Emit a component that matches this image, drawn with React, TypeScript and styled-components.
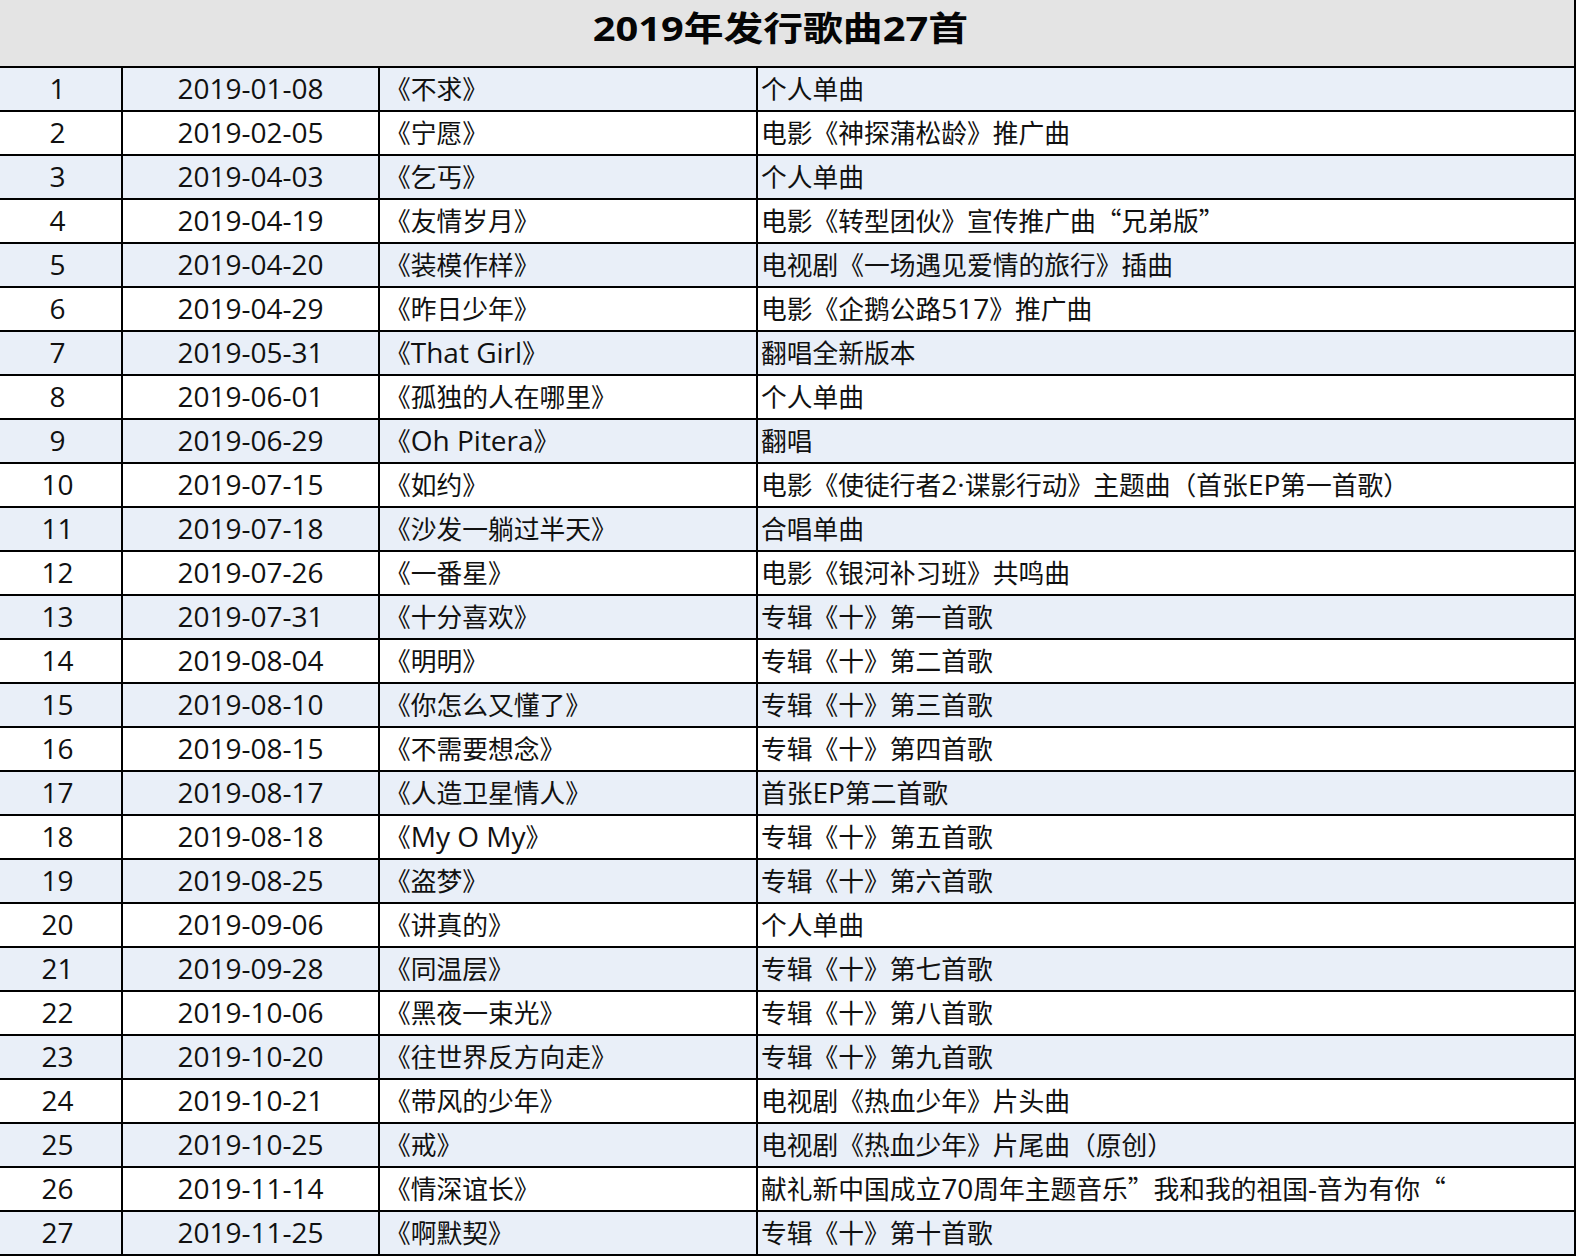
import React from "react";
import styled, { createGlobalStyle } from "styled-components";

const GlobalStyle = createGlobalStyle`
  html, body {
    margin: 0;
    padding: 0;
    background: #ffffff;
  }
  body {
    font-family: "Open Sans", "Noto Sans CJK SC", sans-serif;
    color: #111111;
  }
`;

interface Song {
  no: number;
  date: string;
  title: string;
  note: string;
}

const SONGS: Song[] = [
  { no: 1, date: "2019-01-08", title: "《不求》", note: "个人单曲" },
  { no: 2, date: "2019-02-05", title: "《宁愿》", note: "电影《神探蒲松龄》推广曲" },
  { no: 3, date: "2019-04-03", title: "《乞丐》", note: "个人单曲" },
  { no: 4, date: "2019-04-19", title: "《友情岁月》", note: "电影《转型团伙》宣传推广曲“兄弟版”" },
  { no: 5, date: "2019-04-20", title: "《装模作样》", note: "电视剧《一场遇见爱情的旅行》插曲" },
  { no: 6, date: "2019-04-29", title: "《昨日少年》", note: "电影《企鹅公路517》推广曲" },
  { no: 7, date: "2019-05-31", title: "《That Girl》", note: "翻唱全新版本" },
  { no: 8, date: "2019-06-01", title: "《孤独的人在哪里》", note: "个人单曲" },
  { no: 9, date: "2019-06-29", title: "《Oh Pitera》", note: "翻唱" },
  { no: 10, date: "2019-07-15", title: "《如约》", note: "电影《使徒行者2·谍影行动》主题曲（首张EP第一首歌）" },
  { no: 11, date: "2019-07-18", title: "《沙发一躺过半天》", note: "合唱单曲" },
  { no: 12, date: "2019-07-26", title: "《一番星》", note: "电影《银河补习班》共鸣曲" },
  { no: 13, date: "2019-07-31", title: "《十分喜欢》", note: "专辑《十》第一首歌" },
  { no: 14, date: "2019-08-04", title: "《明明》", note: "专辑《十》第二首歌" },
  { no: 15, date: "2019-08-10", title: "《你怎么又懂了》", note: "专辑《十》第三首歌" },
  { no: 16, date: "2019-08-15", title: "《不需要想念》", note: "专辑《十》第四首歌" },
  { no: 17, date: "2019-08-17", title: "《人造卫星情人》", note: "首张EP第二首歌" },
  { no: 18, date: "2019-08-18", title: "《My O My》", note: "专辑《十》第五首歌" },
  { no: 19, date: "2019-08-25", title: "《盗梦》", note: "专辑《十》第六首歌" },
  { no: 20, date: "2019-09-06", title: "《讲真的》", note: "个人单曲" },
  { no: 21, date: "2019-09-28", title: "《同温层》", note: "专辑《十》第七首歌" },
  { no: 22, date: "2019-10-06", title: "《黑夜一束光》", note: "专辑《十》第八首歌" },
  { no: 23, date: "2019-10-20", title: "《往世界反方向走》", note: "专辑《十》第九首歌" },
  { no: 24, date: "2019-10-21", title: "《带风的少年》", note: "电视剧《热血少年》片头曲" },
  { no: 25, date: "2019-10-25", title: "《戒》", note: "电视剧《热血少年》片尾曲（原创）" },
  { no: 26, date: "2019-11-14", title: "《情深谊长》", note: "献礼新中国成立70周年主题音乐”我和我的祖国-音为有你“" },
  { no: 27, date: "2019-11-25", title: "《啊默契》", note: "专辑《十》第十首歌" },
];

const COLUMNS = "123px 257px 378px 1fr";

const Sheet = styled.div`
  width: 1576px;
  border-right: 2px solid #000;
  box-sizing: border-box;
`;

const TitleBar = styled.div`
  height: 68px;
  box-sizing: border-box;
  border-bottom: 2px solid #000;
  background: #e4e4e4;
  display: flex;
  align-items: center;
  justify-content: center;
  padding: 0 14px 12px 0;
`;

const TitleText = styled.h1`
  margin: 0;
  display: inline-block;
  font-size: 34px;
  font-weight: 700;
  line-height: 1;
  color: #050505;
  transform: scaleX(1.17);
`;

const TitleHan = styled.span`
  font-family: "Noto Sans CJK SC", sans-serif;
`;

const Row = styled.div<{ $striped: boolean }>`
  display: grid;
  grid-template-columns: ${COLUMNS};
  height: 44px;
  box-sizing: border-box;
  border-bottom: 2px solid #000;
  background: ${(p) => (p.$striped ? "#e9eff8" : "#ffffff")};
`;

const Cell = styled.div<{ $align?: "center" | "left"; $pad?: number; $last?: boolean }>`
  display: flex;
  align-items: center;
  justify-content: ${(p) => (p.$align === "left" ? "flex-start" : "center")};
  padding-left: ${(p) => p.$pad ?? 0}px;
  border-right: ${(p) => (p.$last ? "none" : "2px solid #000")};
  box-sizing: border-box;
  font-size: 28px;
  line-height: 1;
  white-space: nowrap;
  overflow: hidden;
  padding-bottom: 2px;
`;

const NoCell = styled(Cell)`
  padding-right: 6px;
`;

const Han = styled.span`
  font-family: "Noto Sans CJK SC", sans-serif;
  font-size: 0.92em;
`;

const CJK = /[\u3000-\u303f\u3400-\u9fff\uff00-\uffef\u201c\u201d]/;

// split text into latin and CJK runs so each gets its own size
function Mixed({ text, title }: { text: string; title?: boolean }) {
  const runs: { han: boolean; s: string }[] = [];
  for (const ch of text) {
    const han = CJK.test(ch);
    const last = runs[runs.length - 1];
    if (last && last.han === han) last.s += ch;
    else runs.push({ han, s: ch });
  }
  const HanRun = title ? TitleHan : Han;
  return (
    <>
      {runs.map((r, i) =>
        r.han ? <HanRun key={i}>{r.s}</HanRun> : <span key={i}>{r.s}</span>,
      )}
    </>
  );
}

export default function App() {
  return (
    <>
      <GlobalStyle />
      <Sheet>
        <TitleBar>
          <TitleText>
            <Mixed text="2019年发行歌曲27首" title />
          </TitleText>
        </TitleBar>
        {SONGS.map((song) => (
          <Row key={song.no} $striped={song.no % 2 === 1}>
            <NoCell>{song.no}</NoCell>
            <Cell>{song.date}</Cell>
            <Cell $align="left" $pad={5}>
              <Mixed text={song.title} />
            </Cell>
            <Cell $align="left" $pad={3} $last>
              <Mixed text={song.note} />
            </Cell>
          </Row>
        ))}
      </Sheet>
    </>
  );
}
